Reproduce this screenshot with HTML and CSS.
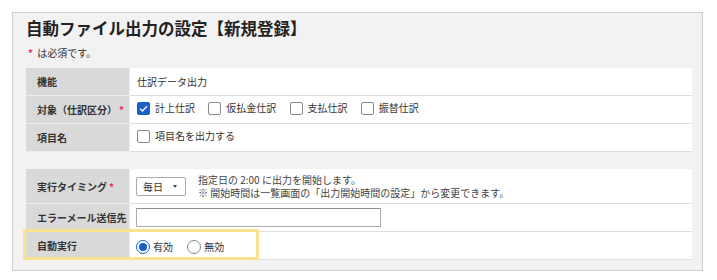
FILE: index.html
```html
<!DOCTYPE html>
<html>
<head>
    <title>自動ファイル出力の設定</title>
    <link rel="stylesheet" href="styles.css">
</head>
<body>

<div class = "panel">
<h1 class = "title">自動ファイル出力の設定【新規登録】</h1>
<p class = "note"><span class = "req">*</span> は必須です。</p>

<table class = "form">
<tr>
    <td class = "label">機能</td>
    <td class = "value">仕訳データ出力</td>
</tr>
<tr>
    <td class = "label">対象（仕訳区分）<span class = "req">*</span></td>
    <td class = "value">
        <label class = "check"><span class = "box on"><svg viewBox="0 0 13 13" width="13" height="13"><path d="M3 6.6 L5.4 9 L10 4.2" fill="none" stroke="#fff" stroke-width="1.3"/></svg></span>計上仕訳</label>
        <label class = "check"><span class = "box"></span>仮払金仕訳</label>
        <label class = "check"><span class = "box"></span>支払仕訳</label>
        <label class = "check"><span class = "box"></span>振替仕訳</label>
    </td>
</tr>
<tr>
    <td class = "label">項目名</td>
    <td class = "value">
        <label class = "check"><span class = "box"></span>項目名を出力する</label>
    </td>
</tr>
</table>

<div class = "lower">
<table class = "form">
<tr class = "tall">
    <td class = "label">実行タイミング<span class = "req">*</span></td>
    <td class = "value">
        <div class = "timing">
            <div class = "select">毎日<span class = "caret"></span></div>
            <div class = "hint">
                <div>指定日の 2:00 に出力を開始します。</div>
                <div>※ 開始時間は一覧画面の「出力開始時間の設定」から変更できます。</div>
            </div>
        </div>
    </td>
</tr>
<tr>
    <td class = "label">エラーメール送信先</td>
    <td class = "value"><div class = "textbox"></div></td>
</tr>
<tr>
    <td class = "label">自動実行</td>
    <td class = "value">
        <label class = "radio"><span class = "dot on"></span>有効</label>
        <label class = "radio"><span class = "dot"></span>無効</label>
    </td>
</tr>
</table>
<!-- highlight box drawn over the last row -->
<div class = "highlight"></div>
</div>

</div>

</body>
</html>
```
FILE: styles.css
```css
body{
    margin: 0;
    font-family: "Noto Sans CJK JP", "Noto Sans", sans-serif;
    color: #333;
    background-color: white;
}

.panel{
    margin: 12px 0 0 12px;
    background-color: #f2f2f2;
    border: 1px solid #cdcdcd;
    padding: 0 0 10px 13px;
    width: 676px;
}

.title{
    margin: 0;
    padding-top: 2px;
    font-size: 16.5px;
    line-height: 26px;
    font-weight: bold;
    color: #222;
}

.note{
    margin: 4px 0 0 2px;
    font-size: 10px;
    line-height: 16px;
}

.req{
    color: #e3306a;
    font-weight: bold;
    margin-left: 2px;
}

.note .req{
    margin: 0 2px 0 0;
}

.form{
    border-collapse: collapse;
    table-layout: fixed;
    width: 666px;
    font-size: 10px;
}

.note + .form{
    margin-top: 7px;
}

.form td{
    height: 27px;
    padding: 0;
    border-bottom: 1px solid #dedede;
}

.form .tall td{
    height: 34px;
}

.label{
    width: 92px;
    padding-left: 11px !important;
    background-color: #d9d9d9;
    font-weight: bold;
    border-right: 1px solid #ececec;
    border-bottom-color: #eeeeee !important;
    white-space: nowrap;
}

.value{
    background-color: white;
    padding-left: 7px !important;
}

.check{
    display: inline-flex;
    align-items: center;
    line-height: 14px;
    margin-right: 11px;
}

.box{
    width: 13px;
    height: 13px;
    box-sizing: border-box;
    border: 1px solid #8a8a8a;
    border-radius: 2px;
    background-color: white;
    margin-right: 5px;
    display: inline-flex;
}

.box.on{
    background-color: #1b5fc9;
    border-color: #1b5fc9;
}

.box svg{
    margin: -1px;
}

.lower{
    position: relative;
    margin-top: 17px;
}

.timing{
    display: flex;
    align-items: center;
}

.select{
    width: 50px;
    height: 19px;
    box-sizing: border-box;
    border: 1px solid #a9a9a9;
    border-radius: 2px;
    background-color: white;
    padding-left: 6px;
    display: flex;
    align-items: center;
    margin-left: -1px;
}

.caret{
    margin-left: 10px;
    border-left: 2.5px solid transparent;
    border-right: 2.5px solid transparent;
    border-top: 3px solid #444;
}

.hint{
    margin-left: 12px;
    line-height: 13px;
    color: #444;
}

.textbox{
    width: 245px;
    height: 19px;
    box-sizing: border-box;
    margin-left: -1px;
    border: 1px solid #acacac;
    border-top-color: #8f8f8f;
    background-color: white;
}

.radio{
    display: inline-flex;
    align-items: center;
    line-height: 14px;
    margin-right: 13px;
    vertical-align: middle;
}

.dot{
    width: 14px;
    height: 14px;
    box-sizing: border-box;
    border: 1px solid #8a8a8a;
    border-radius: 50%;
    background-color: white;
    margin-right: 3px;
    display: inline-flex;
    align-items: center;
    justify-content: center;
    margin-left: -1px;
}

.dot.on{
    border-color: #1b5fc9;
}

.dot.on::after{
    content: "";
    width: 8px;
    height: 8px;
    border-radius: 50%;
    background-color: #1b5fc9;
}

.highlight{
    position: absolute;
    left: -3px;
    top: 60px;
    width: 236px;
    height: 31px;
    box-sizing: border-box;
    border: 3px solid #fbe28f;
    border-radius: 2px;
}
```
